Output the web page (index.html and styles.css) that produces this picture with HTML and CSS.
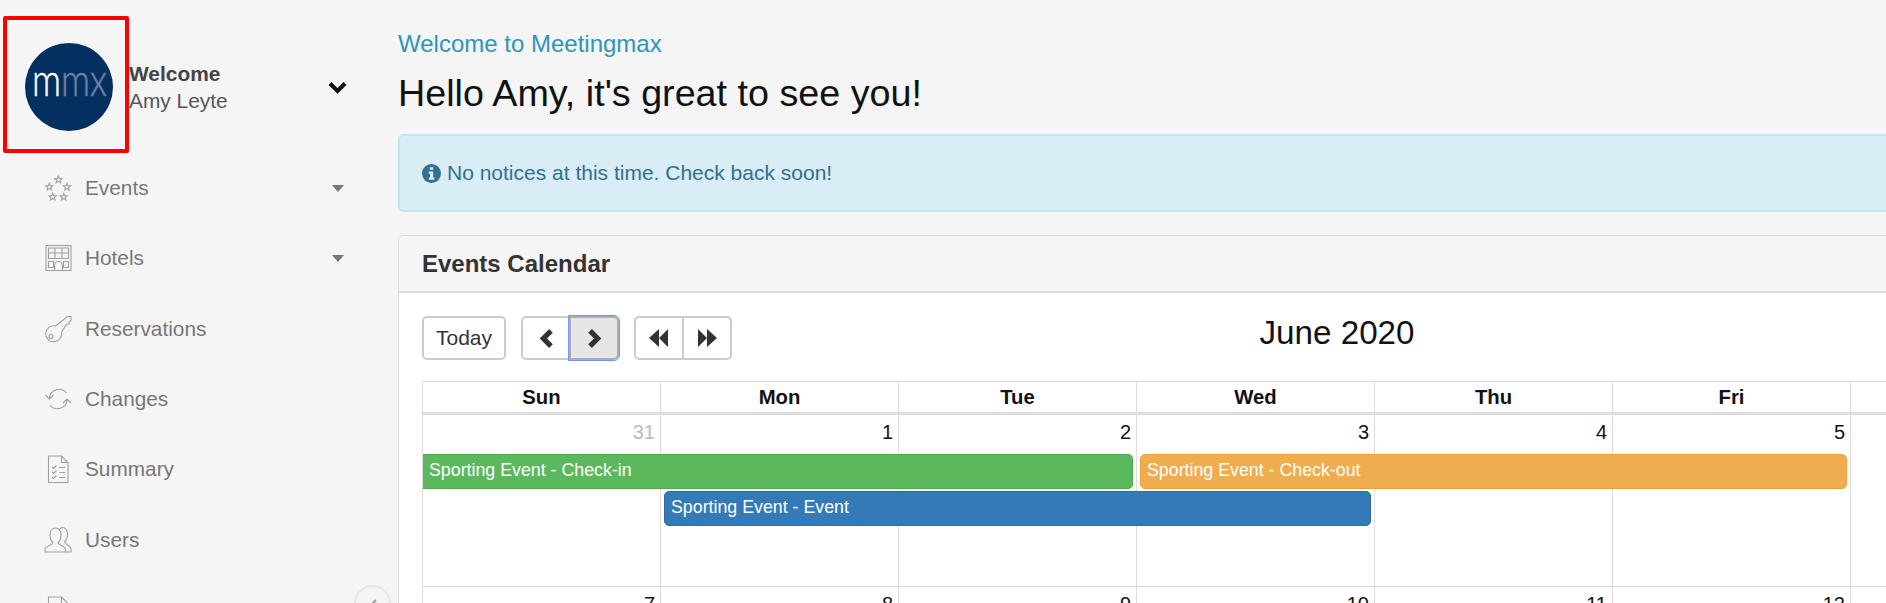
FILE: index.html
```html
<!DOCTYPE html>
<html lang="en">
<head>
<meta charset="utf-8">
<title>Meetingmax</title>
<link rel="stylesheet" href="styles.css">
</head>
<body>
<svg class="defs" width="0" height="0" aria-hidden="true"><defs>
  <polygon id="star" points="0,-3.8 .96,-1.32 3.6,-1.17 1.54,.5 2.22,3.06 0,1.62 -2.22,3.06 -1.54,.5 -3.6,-1.17 -.96,-1.32"/>
</defs></svg>
<div class="app">
  <aside class="sidebar">
    <div class="annotation"></div>
    <header class="profile">
      <svg class="logo" viewBox="0 0 88 88" width="88" height="88" role="img" aria-label="mmx">
        <circle cx="44" cy="44" r="44" fill="#03305f"/>
        <text class="logo-text" x="7" y="53" textLength="75" lengthAdjust="spacingAndGlyphs"><tspan class="logo-m">m</tspan><tspan class="logo-mx">mx</tspan></text>
      </svg>
      <div class="who"><strong>Welcome</strong><span>Amy Leyte</span></div>
      <svg class="who-chevron" viewBox="0 0 19 13" width="19" height="13"><polyline points="2,2.5 9.5,10 17,2.5"/></svg>
    </header>
    <nav class="nav">
      <a class="nav-item">
        <svg class="nav-icon" viewBox="0 0 28 28" width="28" height="28"><use href="#star" x="14.3" y="5.7"/><use href="#star" x="5.3" y="13"/><use href="#star" x="23" y="13"/><use href="#star" x="8.7" y="23"/><use href="#star" x="19.7" y="23"/></svg>
        <span>Events</span><i class="caret"></i>
      </a>
      <a class="nav-item">
        <svg class="nav-icon" viewBox="0 0 28 28" width="28" height="28"><rect x="2" y="1.5" width="25" height="25"/><path d="M4.5 4h20v10.5h-20zM4.5 9h20M11 4v10.5M18 4v10.5M4.5 17.500h5v6h-5zM19.500 17.500h5v6h-5zM10.500 26.500v-5a4 4 0 0 1 8 0v5"/></svg>
        <span>Hotels</span>
        <i class="caret"></i>
      </a>
      <a class="nav-item">
        <svg class="nav-icon" viewBox="0 0 28 28" width="28" height="28"><path d="M11.500 11 L23.500 1.500 L27 1.500 L27 5.500 L25 7 L25 9 L22.500 9.500 L17.500 17 A8 8 0 1 1 11.500 11Z"/><circle cx="7" cy="21.500" r="2"/></svg>
        <span>Reservations</span>
      </a>
      <a class="nav-item">
        <svg class="nav-icon" viewBox="0 0 28 28" width="28" height="28"><path d="M5.500 13a9.500 9.500 0 0 1 17-5M23 15a9.500 9.500 0 0 1-17 5M1.500 10l4 4 4-4M19 18l4-4 4 4"/></svg>
        <span>Changes</span>
      </a>
      <a class="nav-item">
        <svg class="nav-icon" viewBox="0 0 28 28" width="28" height="28"><path d="M4.500 1h13l6.500 6.500V27.500H4.500zM17.500 1v6.500H24M8 12l1.500 1.500 3-3M8 17l1.500 1.500 3-3M8 22l1.500 1.500 3-3M15 12.500h6M15 17.500h6M15 22.500h6"/></svg>
        <span>Summary</span>
      </a>
      <a class="nav-item">
        <svg class="nav-icon" viewBox="0 0 28 28" width="28" height="28"><path d="M1 26v-3c0-3 8-3.500 8-6.500-2-1.500-3-4.500-3-7.500 0-4 2-7 5.500-7s5.500 3 5.500 7c0 3-1 6-3 7.500 0 3 7.500 3.500 7.500 6.500v3zM16 3c.7-1.200 1.500-1.500 2.500-1.500 3 0 5 3 5 6.500 0 3-1 6-3 7.500 0 3 6.500 4 6.500 7.500v3h-5"/></svg>
        <span>Users</span>
      </a>
      <a class="nav-item">
        <svg class="nav-icon" viewBox="0 0 28 28" width="28" height="28"><path d="M4.500 1h13l6.500 6.500V27.500H4.500zM17.500 1v6.500H24"/></svg>
      </a>
    </nav>
    <button class="collapse" aria-label="Collapse"><svg viewBox="0 0 12 16" width="12" height="16"><polyline points="9,2 3,8 9,14"/></svg></button>
  </aside>
  <main class="main">
    <p class="eyebrow">Welcome to Meetingmax</p>
    <h1 class="greeting">Hello Amy, it's great to see you!</h1>
    <div class="alert">
      <svg class="alert-icon" viewBox="0 0 19 19" width="19" height="19"><circle cx="9.500" cy="9.500" r="9.500" fill="#31708f"/><path fill="#d9edf7" d="M7.800 3.200h3.400v2.600H7.800zM6.800 7.500h4.400v6h1.200v2.300H6.800v-2.300H8V9.800H6.800z"/></svg>
      <span>No notices at this time. Check back soon!</span>
    </div>
    <section class="panel">
      <h2 class="panel-title">Events Calendar</h2>
      <div class="panel-body">
        <div class="toolbar">
          <div class="controls">
            <button class="btn btn-today">Today</button>
            <div class="btn-group">
              <button class="btn btn-icon" aria-label="Previous"><svg viewBox="0 0 14 20" width="15" height="21"><path class="solid" d="M9.500 1 13 4.500 7.500 10 13 15.500 9.500 19 0.500 10Z"/></svg></button>
              <button class="btn btn-icon is-focus" aria-label="Next"><svg viewBox="0 0 14 20" width="15" height="21"><path class="solid" d="M4.500 1 1 4.500 6.500 10 1 15.500 4.500 19 13.500 10Z"/></svg></button>
            </div>
            <div class="btn-group">
              <button class="btn btn-icon" aria-label="Previous year"><svg viewBox="0 0 20 18" width="20" height="18"><path class="solid" d="M0 9 10 0V18ZM10 9 19 0V18Z"/></svg></button>
              <button class="btn btn-icon" aria-label="Next year"><svg viewBox="0 0 20 18" width="20" height="18"><path class="solid" d="M20 9 10 0V18ZM10 9 1 0V18Z"/></svg></button>
            </div>
          </div>
          <h2 class="month">June 2020</h2>
        </div>
        <div class="calendar">
          <div class="head"><div>Sun</div><div>Mon</div><div>Tue</div><div>Wed</div><div>Thu</div><div>Fri</div><div>Sat</div></div>
          <div class="week">
            <div class="cell c1"></div><div class="cell c2"></div><div class="cell c3"></div><div class="cell c4"></div><div class="cell c5"></div><div class="cell c6"></div><div class="cell c7"></div>
            <div class="num c1 muted">31</div><div class="num c2">1</div><div class="num c3">2</div><div class="num c4">3</div><div class="num c5">4</div><div class="num c6">5</div><div class="num c7">6</div>
            <div class="event green">Sporting Event - Check-in</div>
            <div class="event orange">Sporting Event - Check-out</div>
            <div class="event blue">Sporting Event - Event</div>
          </div>
          <div class="week">
            <div class="cell c1"></div><div class="cell c2"></div><div class="cell c3"></div><div class="cell c4"></div><div class="cell c5"></div><div class="cell c6"></div><div class="cell c7"></div>
            <div class="num c1">7</div><div class="num c2">8</div><div class="num c3">9</div><div class="num c4">10</div><div class="num c5">11</div><div class="num c6">12</div><div class="num c7">13</div>
          </div>
        </div>
      </div>
    </section>
  </main>
</div>
</body>
</html>
```
FILE: styles.css
```css
* { box-sizing: border-box; }
html, body { margin: 0; height: 603px; overflow: hidden; background: #f5f5f5; }
body { font-family: "Liberation Sans", Arial, sans-serif; color: #111; }
.defs { position: absolute; }
.app { display: flex; width: 2140px; height: 603px; }

.sidebar { position: relative; flex: 0 0 398px; }
.annotation { position: absolute; left: 3px; top: 16px; width: 126px; height: 137px; border: 4px solid #f00; border-radius: 2px; }
.profile { display: flex; align-items: center; height: 153px; padding: 21px 51px 0 25px; }
.logo { flex: none; }
.logo-text { font-family: Lato, sans-serif; font-weight: 300; font-size: 45px; }
.logo-m { fill: #fff; stroke: #fff; stroke-width: .5; }
.logo-mx { fill: #6f7fae; stroke: #6f7fae; stroke-width: .5; }
.who { display: flex; flex-direction: column; margin-left: 16px; font-size: 20.9px; line-height: 27px; color: #555; }
.who strong { color: #444; }
.who-chevron { margin-left: auto; fill: none; stroke: #111; stroke-width: 4; }
.nav { display: flex; flex-direction: column; padding: 0 54px 0 44px; }
.nav-item { display: flex; align-items: center; height: 70.3px; font-size: 20.8px; color: #777; }
.nav-icon { flex: none; margin-right: 13px; fill: none; stroke: #a0a0a0; stroke-width: 1.1; }
.caret { margin-left: auto; margin-top: 1px; width: 0; height: 0; border-left: 6.5px solid transparent; border-right: 6.5px solid transparent; border-top: 7px solid #777; }
.collapse { position: absolute; left: 354px; top: 585px; width: 37px; height: 37px; padding: 5px 0 0; border: 2px solid #e6e6e6; border-radius: 50%; background: #f5f5f5; }
.collapse svg { display: block; margin: 0 auto; fill: none; stroke: #999; stroke-width: 2; }

.main { flex: 0 0 1714px; padding-top: 30px; }
.eyebrow { margin: 0; font-size: 24px; line-height: 28px; color: #2e96b8; }
.greeting { margin: 12px 0 0; font-size: 37.7px; line-height: 46px; font-weight: 400; color: #111; }
.alert { display: flex; align-items: center; gap: 6px; height: 78px; margin-top: 18px; padding: 0 22px; border: 2px solid #bce8f1; border-radius: 5px; background: #d9edf7; color: #31708f; font-size: 21px; }
.alert-icon { flex: none; }
.panel { margin-top: 23px; border: 1px solid #ddd; border-radius: 5px 5px 0 0; }
.panel-title { margin: 0; height: 57px; padding: 0 23px; border-bottom: 2px solid #ddd; font-size: 24px; line-height: 55px; color: #333; }
.panel-body { padding: 23px 23px 0; background: #fff; height: 400px; }

.toolbar { display: flex; align-items: flex-start; height: 44px; margin-bottom: 21px; padding-right: 147px; }
.controls { display: flex; gap: 15px; }
.btn { display: flex; align-items: center; justify-content: center; height: 44px; padding: 0; border: 2px solid #ccc; border-radius: 5px; background: #fff; font: 21px "Liberation Sans", Arial, sans-serif; color: #333; }
.btn-today { width: 84px; }
.btn-group { display: flex; }
.btn-icon { width: 50px; }
.btn-group .btn:first-child { border-radius: 5px 0 0 5px; }
.btn-group .btn:last-child { margin-left: -2px; border-radius: 0 5px 5px 0; }
.is-focus { position: relative; background: #e6e6e6; border-color: #adadad; outline: 1px solid #6a9bee; }
.solid { fill: #333; }
.month { flex: 1; margin: 0; text-align: center; font-size: 33.2px; line-height: 34px; font-weight: 400; color: #111; }

.calendar { width: 1667px; border-left: 1px solid #ddd; }
.head { display: grid; grid-template-columns: repeat(7, 238px); border-top: 1px solid #ddd; border-bottom: 3px solid #ddd; box-sizing: content-box; height: 30px; }
.head div { border-right: 1px solid #ddd; text-align: center; font-size: 20.3px; line-height: 30px; font-weight: 700; color: #111; }
.week { display: grid; grid-template-columns: repeat(7, 238px); grid-template-rows: 39px 35px 2px 35px 60px; border-bottom: 1px solid #ddd; }
.cell { grid-row: 1 / -1; border-right: 1px solid #ddd; }
.num { grid-row: 1; padding: 4px 6px 0 0; text-align: right; font-size: 20px; line-height: 26px; color: #111; }
.num.muted { color: #bbb; }
.c1 { grid-column: 1; } .c2 { grid-column: 2; } .c3 { grid-column: 3; } .c4 { grid-column: 4; }
.c5 { grid-column: 5; } .c6 { grid-column: 6; } .c7 { grid-column: 7; }
.event { padding: 0 6px; border: 1px solid; border-radius: 5px; font-size: 17.8px; line-height: 31px; color: #fff; white-space: nowrap; }
.green { grid-column: 1 / span 3; grid-row: 2; margin-right: 4px; background: #5cb85c; border-color: #4cae4c; border-left: 0; border-radius: 0 5px 5px 0; }
.orange { grid-column: 4 / span 3; grid-row: 2; margin: 0 4px 0 3px; background: #f0ad4e; border-color: #eea236; }
.blue { grid-column: 2 / span 3; grid-row: 4; margin: 0 4px 0 3px; background: #337ab7; border-color: #2e6da4; }
```
